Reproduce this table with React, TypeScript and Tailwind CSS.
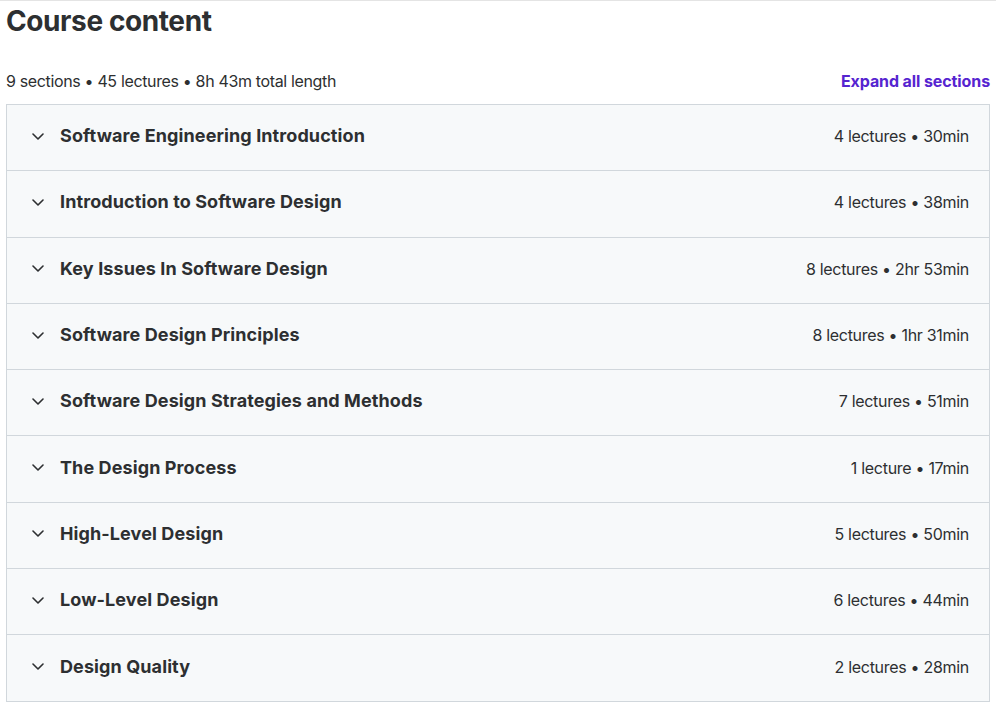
const sections = [
  { title: "Software Engineering Introduction", meta: "4 lectures • 30min" },
  { title: "Introduction to Software Design", meta: "4 lectures • 38min" },
  { title: "Key Issues In Software Design", meta: "8 lectures • 2hr 53min" },
  { title: "Software Design Principles", meta: "8 lectures • 1hr 31min" },
  { title: "Software Design Strategies and Methods", meta: "7 lectures • 51min" },
  { title: "The Design Process", meta: "1 lecture • 17min" },
  { title: "High-Level Design", meta: "5 lectures • 50min" },
  { title: "Low-Level Design", meta: "6 lectures • 44min" },
  { title: "Design Quality", meta: "2 lectures • 28min" },
];

const Chevron = () => (
  <svg width="12" height="7" viewBox="0 0 12 7" fill="none" stroke="#2d2f31" strokeWidth="1.6" strokeLinecap="round" strokeLinejoin="round">
    <path d="M1 1l5 5 5-5" />
  </svg>
);

const App = () => (
  <div className="w-[996px] h-[710px] bg-white border-t border-[#e4e4e4] text-[#2d2f31] font-['Inter',sans-serif] overflow-hidden">
    <div className="pl-[6px] pr-[6px]">
      <h2 className="text-[28px] leading-[38px] font-bold tracking-[-0.4px] mt-[1px]">Course content</h2>
      <div className="flex items-end justify-between mt-[29px] mb-[11px]">
        <p className="text-[16px] leading-[24px] tracking-[-0.35px]">9 sections • 45 lectures • 8h 43m total length</p>
        <button className="text-[16px] leading-[24px] font-bold text-[#5624d0] tracking-[-0.1px]">Expand all sections</button>
      </div>
      <div className="border border-b-0 border-[#d1d7dc] bg-[#f7f9fa] w-[984px]">
        {sections.map((s) => (
          <div key={s.title} className="h-[66.3px] border-b border-[#d1d7dc] flex items-center pl-[25px] pr-[20px] pb-[3px]">
            <span className="w-[28px] flex items-center">
              <Chevron />
            </span>
            <span className="flex-1 text-[18px] font-bold leading-[24px] tracking-[0.1px]">{s.title}</span>
            <span className="text-[16px] leading-[24px] tracking-[-0.3px]">{s.meta}</span>
          </div>
        ))}
      </div>
    </div>
  </div>
);

export default App;
